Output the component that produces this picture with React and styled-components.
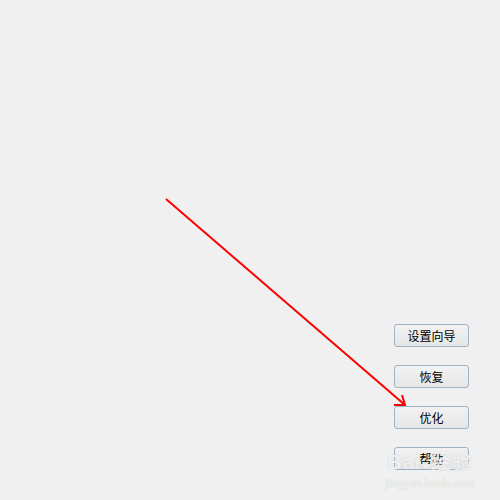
import React from 'react';
import styled, { createGlobalStyle } from 'styled-components';

const GlobalStyle = createGlobalStyle`
  html, body {
    margin: 0;
    padding: 0;
    background: #f0f0f0;
  }
`;

const buttons = ['设置向导', '恢复', '优化', '帮助'];

export default function App() {
  return (
    <>
      <GlobalStyle />
      <Page>
        <ButtonColumn>
          {buttons.map((label) => (
            <Button key={label}>{label}</Button>
          ))}
        </ButtonColumn>

        <Annotation viewBox="0 0 500 500">
          <line x1="166" y1="199" x2="405" y2="405" stroke="#ff0000" strokeWidth="2" />
          <polyline points="394,405 405,405 402,395" fill="none" stroke="#ff0000" strokeWidth="2" />
        </Annotation>

        <Watermark>
          <Brand>
            Bai<Paw>●</Paw>经验
          </Brand>
          <Site>jingyan.baidu.com</Site>
        </Watermark>
      </Page>
    </>
  );
}

const Page = styled.div`
  position: relative;
  width: 500px;
  height: 500px;
  overflow: hidden;
  background: #f0f0f0;
  display: flex;
  justify-content: flex-end;
`;

const ButtonColumn = styled.div`
  display: flex;
  flex-direction: column;
  gap: 18px;
  padding: 324px 31px 0 0;
`;

const Button = styled.button`
  width: 75px;
  height: 23px;
  padding: 0;
  border: 1px solid #9db3c8;
  border-radius: 3px;
  background: linear-gradient(#f2f2f2, #e6e6e6);
  color: #000;
  font-family: "Noto Sans CJK SC", sans-serif;
  font-size: 12px;
  line-height: 21px;
  text-align: center;
  outline: none;
`;

const Annotation = styled.svg`
  position: absolute;
  left: 0;
  top: 0;
  width: 500px;
  height: 500px;
  pointer-events: none;
`;

const Watermark = styled.div`
  position: absolute;
  left: 384px;
  top: 450px;
  width: 92px;
  display: flex;
  flex-direction: column;
  align-items: center;
  color: rgba(255, 255, 255, 0.75);
  text-shadow: 0 0 1px rgba(160, 160, 160, 0.6);
  pointer-events: none;
`;

const Brand = styled.div`
  font-family: "Liberation Sans", "Noto Sans CJK SC", sans-serif;
  font-size: 20px;
  font-weight: bold;
  line-height: 24px;
  letter-spacing: 1px;
`;

const Paw = styled.span`
  font-size: 14px;
`;

const Site = styled.div`
  font-family: "Liberation Serif", serif;
  font-size: 12px;
  line-height: 14px;
`;
